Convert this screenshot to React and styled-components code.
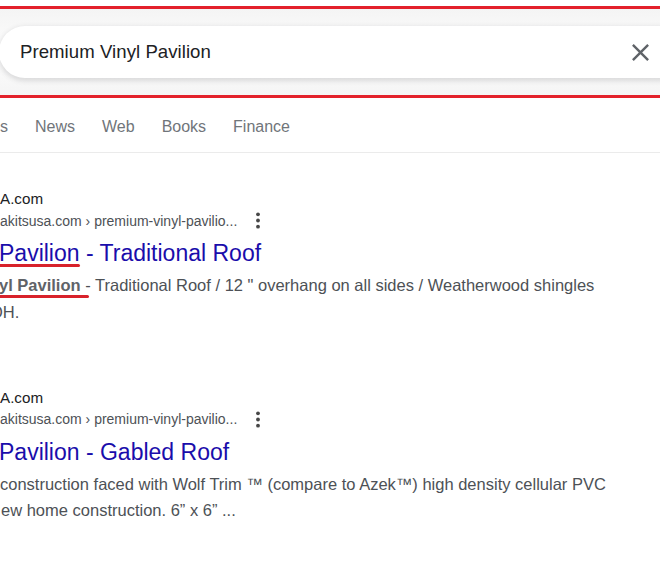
import React from "react";
import styled, { createGlobalStyle } from "styled-components";

const GlobalStyle = createGlobalStyle`
  html, body { margin: 0; padding: 0; background: #fff; }
  body { font-family: "Liberation Sans", Arial, sans-serif; }
  * { box-sizing: border-box; }
`;

const Page = styled.div`
  width: 660px;
  height: 577px;
  overflow: hidden;
  padding-top: 6px;
  background: #fff;
`;

const Header = styled.header`
  border-top: 3px solid #e3212b;
  border-bottom: 3px solid #e3212b;
  background: linear-gradient(#f4f4f4, #fbfbfb 40%, #fbfbfb 60%, #f5f5f5);
  padding: 17px 0 17px;
`;

const SearchBox = styled.div`
  display: flex;
  align-items: center;
  height: 52px;
  margin: 0 -40px 0 -1px;
  padding: 0 45px 0 21px;
  border-radius: 26px;
  background: #fff;
  box-shadow: 0 2px 5px 1px rgba(64, 60, 67, 0.16);
`;

const Query = styled.div`
  flex: 1;
  font-size: 18.6px;
  color: #202124;
  letter-spacing: 0.05px;
`;

const ClearIcon = styled.svg`
  width: 29px;
  height: 29px;
  fill: #5f6368;
  display: block;
`;

const Tabs = styled.nav`
  display: flex;
  align-items: center;
  gap: 27px;
  height: 55px;
  padding-top: 4px;
  border-bottom: 1px solid #ebebeb;
`;

const Tab = styled.span`
  font-size: 16px;
  color: #70757a;
`;

const Results = styled.main`
  display: flex;
  flex-direction: column;
  gap: 61px;
  padding-top: 35px;
`;

const Result = styled.article`
  display: flex;
  flex-direction: column;
`;

const SiteName = styled.div`
  font-size: 15.2px;
  line-height: 22px;
  color: #202124;
`;

const UrlRow = styled.div`
  display: flex;
  align-items: center;
  height: 21px;
`;

const Url = styled.span`
  font-size: 14px;
  color: #4d5156;
  white-space: nowrap;
`;

const Dots = styled.svg`
  width: 6px;
  height: 17px;
  margin-left: 18px;
  fill: #474747;
  display: block;
`;

const Title = styled.h3`
  margin: 8px 0 0 -1px;
  font-weight: normal;
  font-size: 23px;
  line-height: 28px;
  color: #1a0dab;
  white-space: nowrap;
`;

const Snippet = styled.div`
  margin-top: 5px;
  font-size: 16.5px;
  line-height: 26.8px;
  color: #4d5156;
`;

const Line = styled.div`
  white-space: nowrap;
  margin-left: ${(p) => p.$lead || 0}px;
`;

const Strong = styled.b`
  color: #5f6368;
  font-weight: bold;
`;

const Marked = styled.span`
  position: relative;
  &::after {
    content: "";
    position: absolute;
    left: -6px;
    right: ${(p) => p.$trim || 0}px;
    bottom: ${(p) => p.$drop || 0}px;
    height: 3px;
    border-radius: 2px;
    background: #d8222b;
  }
`;

function DotsIcon() {
  return (
    <Dots viewBox="0 0 6 17">
      <circle cx="3" cy="2.3" r="1.9" />
      <circle cx="3" cy="8.5" r="1.9" />
      <circle cx="3" cy="14.7" r="1.9" />
    </Dots>
  );
}

export default function App() {
  return (
    <>
      <GlobalStyle />
      <Page>
        <Header>
          <SearchBox>
            <Query>Premium Vinyl Pavilion</Query>
            <ClearIcon viewBox="0 0 24 24">
              <path d="M19 6.41L17.59 5 12 10.59 6.41 5 5 6.41 10.59 12 5 17.59 6.41 19 12 13.41 17.59 19 19 17.59 13.41 12z" />
            </ClearIcon>
          </SearchBox>
        </Header>
        <Tabs>
          <Tab>s</Tab>
          <Tab>News</Tab>
          <Tab>Web</Tab>
          <Tab>Books</Tab>
          <Tab>Finance</Tab>
        </Tabs>
        <Results>
          <Result>
            <SiteName>A.com</SiteName>
            <UrlRow>
              <Url>akitsusa.com › premium-vinyl-pavilio...</Url>
              <DotsIcon />
            </UrlRow>
            <Title>
              <Marked $trim={6} $drop={-1}>Pavilion </Marked>- Traditional Roof
            </Title>
            <Snippet>
              <Line $lead={-1}>
                <Marked $trim={2} $drop={-4}>
                  <Strong>yl Pavilion</Strong> -
                </Marked>{" "}
                Traditional Roof / 12 " overhang on all sides / Weatherwood shingles
              </Line>
              <Line $lead={-10}>OH.</Line>
            </Snippet>
          </Result>
          <Result>
            <SiteName>A.com</SiteName>
            <UrlRow>
              <Url>akitsusa.com › premium-vinyl-pavilio...</Url>
              <DotsIcon />
            </UrlRow>
            <Title>Pavilion - Gabled Roof</Title>
            <Snippet>
              <Line>construction faced with Wolf Trim ™ (compare to Azek™) high density cellular PVC</Line>
              <Line $lead={1}>ew home construction. 6” x 6” ...</Line>
            </Snippet>
          </Result>
        </Results>
      </Page>
    </>
  );
}
